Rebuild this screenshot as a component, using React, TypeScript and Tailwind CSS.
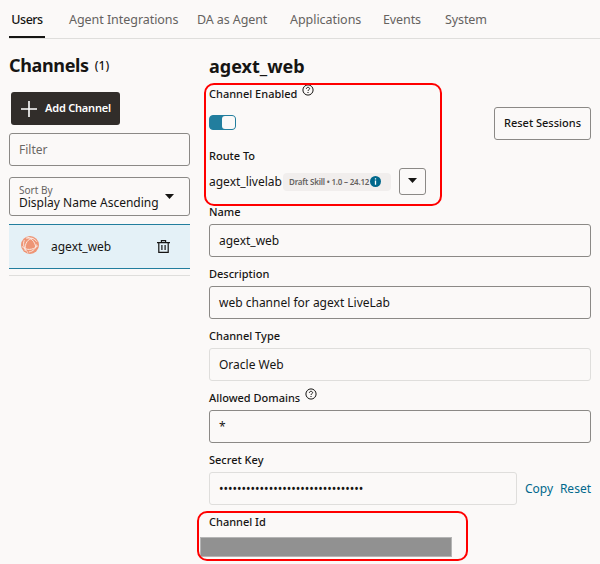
import type { ReactNode } from "react";

function HelpIcon({ className = "" }: { className?: string }) {
  return (
    <svg className={className} width="12" height="12" viewBox="0 0 12 12" fill="none" stroke="#161513">
      <circle cx="6" cy="6" r="5.1" strokeWidth="1" />
      <path d="M4.4 4.9C4.4 3.9 5.1 3.3 6 3.3S7.6 3.9 7.6 4.7C7.6 5.7 6 5.8 6 7" strokeWidth="1" />
      <path d="M6 7.9V9" strokeWidth="1.1" />
    </svg>
  );
}

function Label({ children, help = false, className = "" }: { children: ReactNode; help?: boolean; className?: string }) {
  return (
    <div className="flex h-4 items-center">
      <span className={`text-[11px] leading-4 font-medium whitespace-nowrap ${className}`}>{children}</span>
      {help && <HelpIcon className="mb-[9px] ml-[5px] shrink-0" />}
    </div>
  );
}

function Field({ label, value, help, readOnly = false, labelClass, valueClass = "" }: {
  label: string; value: string; help?: boolean; readOnly?: boolean; labelClass?: string; valueClass?: string;
}) {
  return (
    <div className="mb-[9px] flex flex-col gap-1">
      <Label help={help} className={labelClass}>{label}</Label>
      <div className={`flex h-[33px] items-center rounded-[3px] border px-[9px] text-[12px] ${readOnly ? "border-[#dfdedc]" : "border-[#8b8986]"}`}>
        <span className={valueClass}>{value}</span>
      </div>
    </div>
  );
}

function GlobeIcon() {
  return (
    <svg width="18" height="18" viewBox="0 0 18 18" fill="none">
      <circle cx="9" cy="9" r="9" fill="#ee9575" />
      <g stroke="#fbe9e2" strokeWidth="1">
        <path d="M5.2 1C9.5 1.2 14 5.5 14.8 11.2" />
        <path d="M12.4 2.3C7 2.5 3.5 7 4.1 14.8" />
        <path d="M1 10.5C5 14.5 11.5 14.5 16.8 9.8" />
        <path d="M3.3 4.2C1.7 8 2.8 13 7 16.6" />
        <path d="M5.4 2.6C9 .9 13.5 2.4 16 5.8" />
        <path d="M15.3 8.5C15 12.5 12.2 15.4 7.8 16" />
      </g>
    </svg>
  );
}

function TrashIcon() {
  return (
    <svg width="13" height="13" viewBox="0 0 13 13" fill="none" stroke="#161513" strokeWidth="1.2">
      <path d="M0 2.6H13M4.4 2.4V.7H8.6V2.4M1.8 2.8V12.3H11.2V2.8M4.9 5V10M8.1 5V10" />
    </svg>
  );
}

function Caret() {
  return (
    <svg width="9" height="5" viewBox="0 0 9 5" fill="#161513">
      <path d="M0 0H9L4.5 5Z" />
    </svg>
  );
}

const tabs = [
  { name: "Agent Integrations", width: "w-[128px]", spacing: "tracking-[-0.05px]" },
  { name: "DA as Agent", width: "w-[93px]", spacing: "tracking-[-0.1px]" },
  { name: "Applications", width: "w-[93px]", spacing: "tracking-[-0.05px]" },
  { name: "Events", width: "w-[62px]", spacing: "tracking-[-0.1px]" },
  { name: "System", width: "w-[60px]", spacing: "tracking-[-0.1px]" },
];

export default function App() {
  return (
    <div className="relative h-[564px] w-[600px] overflow-hidden bg-[#fbf9f8] font-['Noto_Sans','Open_Sans',sans-serif] text-[#161513]">
      <nav className="ml-[9px] flex h-[39px] border-b border-[#dfdedc] text-[12.5px] text-[#65625f]">
        <div className="mr-6 flex h-[38px] w-9 items-center justify-center border-b-2 border-[#161513] pt-[5px] font-medium tracking-[-0.5px] text-[#161513]">Users</div>
        {tabs.map((tab) => (
          <div key={tab.name} className={`flex h-[38px] items-center pt-[3px] whitespace-nowrap ${tab.width} ${tab.spacing}`}>{tab.name}</div>
        ))}
      </nav>

      <div className="flex pl-[9px]">
        <aside className="w-[181px] shrink-0">
          <div className="flex h-[53px] items-center">
            <h1 className="text-[18px] font-bold tracking-[-0.35px]">Channels</h1>
            <span className="ml-1.5 text-[12px] font-medium">(1)</span>
          </div>
          <button className="ml-0.5 flex h-[33px] w-[109px] items-center rounded-[3px] bg-[#312d2a] pl-2.5 text-[11px] font-semibold whitespace-nowrap text-white">
            <svg width="16" height="16" viewBox="0 0 16 16" stroke="white" strokeWidth="1.6"><path d="M0 8H16M8 0V16" /></svg>
            <span className="ml-2 tracking-[-0.2px]">Add Channel</span>
          </button>
          <div className="mt-2 flex h-[33px] items-center rounded-[3px] border border-[#8b8986] px-[9px] text-[12px] text-[#6b6865]">Filter</div>
          <div className="mt-[11px] flex h-[39px] items-center justify-between rounded-[3px] border border-[#8b8986] pr-[15px] pl-[9px]">
            <div className="flex flex-col whitespace-nowrap">
              <span className="text-[10px] leading-[12px] text-[#65625f]">Sort By</span>
              <span className="text-[12px] leading-[14px]">Display Name Ascending</span>
            </div>
            <Caret />
          </div>
          <div className="mt-2 flex h-[45px] items-center border-y border-[#227e9e] bg-[#e4f1f7] pr-5 pl-3 text-[12px]">
            <div className="mb-1"><GlobeIcon /></div>
            <span className="ml-3">agext_web</span>
            <span className="ml-auto"><TrashIcon /></span>
          </div>
          <div className="mt-1.5 h-px bg-[#dfdedc]" />
        </aside>

        <main className="ml-[19px] w-[382px] shrink-0">
          <h2 className="flex h-[47px] items-center pt-2 text-[18px] font-bold">agext_web</h2>
          <Label help>Channel Enabled</Label>
          <div className="flex h-[46px] items-center justify-between">
            <div className="mb-[5px] flex h-[15px] w-[27px] justify-end rounded-[4px] border border-[#227e9e] bg-[#227e9e]">
              <div className="h-[13px] w-[13px] rounded-[3px] bg-[#fbf9f8]" />
            </div>
            <button className="mb-1 flex h-[33px] w-[97px] items-center justify-center rounded-[3px] border border-[#8b8986] text-[11px] font-medium whitespace-nowrap">Reset Sessions</button>
          </div>
          <Label>Route To</Label>
          <div className="flex h-10 items-center pb-[5px] text-[12px]">
            <span className="w-[74px]">agext_livelab</span>
            <div className="flex h-[18px] w-[108px] items-center rounded-[4px] bg-[#f1eeed] pl-1.5">
              <span className="w-[81px] text-[8px] font-semibold tracking-[-0.2px] whitespace-nowrap text-[#65625f]">Draft Skill • 1.0 – 24.12</span>
              <svg width="11" height="11" viewBox="0 0 11 11"><circle cx="5.5" cy="5.5" r="5.5" fill="#00688c" /><path d="M5.5 2.2V3.5M5.5 4.5V8.7" stroke="white" strokeWidth="1.3" /></svg>
            </div>
            <button className="ml-2 flex h-[27px] w-[27px] items-center justify-center rounded-[3px] border border-[#8b8986] pb-[2px]"><Caret /></button>
          </div>
          <Field label="Name" value="agext_web" />
          <Field label="Description" value="web channel for agext LiveLab" />
          <Field label="Channel Type" value="Oracle Web" readOnly />
          <Field label="Allowed Domains" value="*" help />
          <div className="flex">
            <div className="w-[309px]">
              <Field label="Secret Key" value="••••••••••••••••••••••••••••••••" readOnly />
            </div>
            <div className="mt-5 flex h-[33px] items-center text-[12px] text-[#00688c]">
              <a className="ml-2 w-[35px]">Copy</a>
              <a>Reset</a>
            </div>
          </div>
          <Label>Channel Id</Label>
          <div className="mt-[7px] -ml-[9px] h-5 w-[252px] border border-[#b5b5b5] bg-[#919191]" />
        </main>
      </div>

      <div className="pointer-events-none absolute top-[83px] left-[204px] h-[123px] w-[238px] rounded-[10px] border-2 border-[#ff0000]" />
      <div className="pointer-events-none absolute top-[511px] left-[197px] h-[50px] w-[271px] rounded-[10px] border-2 border-[#ff0000]" />
    </div>
  );
}
